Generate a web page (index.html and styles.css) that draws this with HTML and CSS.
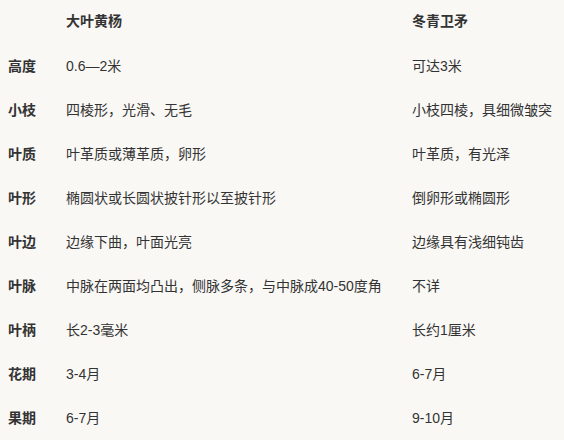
FILE: index.html
```html
<!DOCTYPE html>
<html lang="zh">
<head>
<meta charset="utf-8">
<link rel="stylesheet" href="styles.css">
</head>
<body>
<div class="table">
  <div class="row head"><div class="c1"></div><div class="c2">大叶黄杨</div><div class="c3">冬青卫矛</div></div>
  <div class="row"><div class="c1">高度</div><div class="c2">0.6—2米</div><div class="c3">可达3米</div></div>
  <div class="row"><div class="c1">小枝</div><div class="c2">四棱形，光滑、无毛</div><div class="c3">小枝四棱，具细微皱突</div></div>
  <div class="row"><div class="c1">叶质</div><div class="c2">叶革质或薄革质，卵形</div><div class="c3">叶革质，有光泽</div></div>
  <div class="row"><div class="c1">叶形</div><div class="c2">椭圆状或长圆状披针形以至披针形</div><div class="c3">倒卵形或椭圆形</div></div>
  <div class="row"><div class="c1">叶边</div><div class="c2">边缘下曲，叶面光亮</div><div class="c3">边缘具有浅细钝齿</div></div>
  <div class="row"><div class="c1">叶脉</div><div class="c2">中脉在两面均凸出，侧脉多条，与中脉成40-50度角</div><div class="c3">不详</div></div>
  <div class="row"><div class="c1">叶柄</div><div class="c2">长2-3毫米</div><div class="c3">长约1厘米</div></div>
  <div class="row"><div class="c1">花期</div><div class="c2">3-4月</div><div class="c3">6-7月</div></div>
  <div class="row"><div class="c1">果期</div><div class="c2">6-7月</div><div class="c3">9-10月</div></div>
</div>
</body>
</html>
```
FILE: styles.css
```css
html, body {
  margin: 0;
  padding: 0;
  background: #f9f8f5;
}
body {
  font-family: "Liberation Sans", "Noto Sans CJK SC", sans-serif;
  font-size: 14px;
  color: #333;
}
.table {
  padding-left: 8px;
}
.row {
  display: grid;
  grid-template-columns: 58px 346px 1fr;
  height: 44px;
  align-items: center;
  line-height: 20px;
  white-space: nowrap;
}
.row.head {
  padding-bottom: 3px;
  box-sizing: border-box;
  font-weight: bold;
}
.c1 {
  font-weight: bold;
}
```
